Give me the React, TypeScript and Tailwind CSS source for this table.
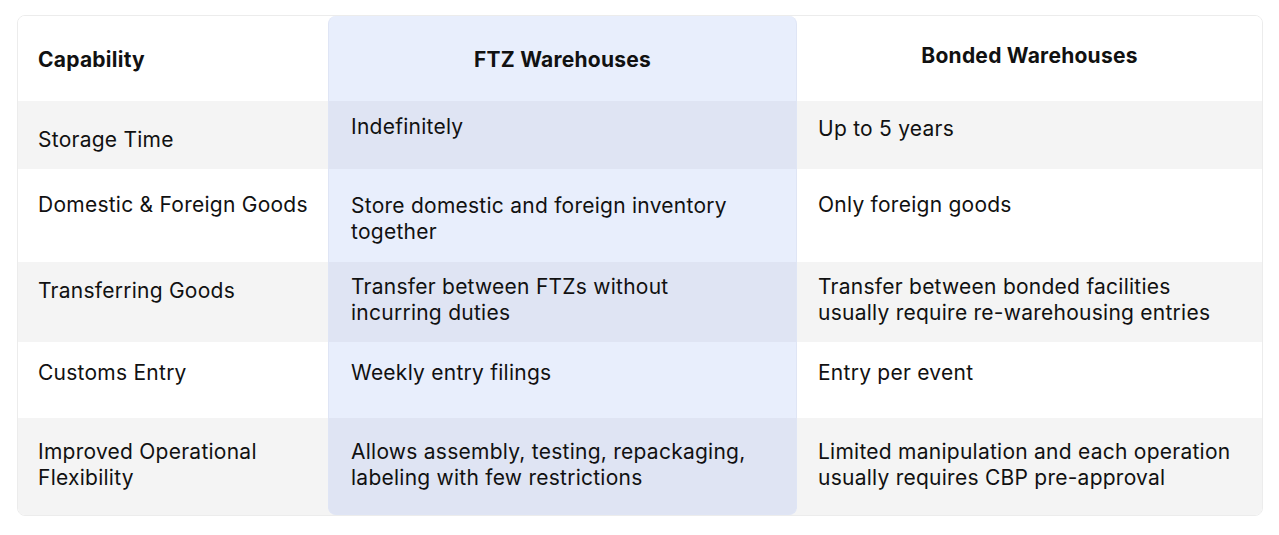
import React from "react";

type Cell = { text: React.ReactNode; pt: string };
type Row = { h: string; gray: boolean; cells: [Cell, Cell, Cell] };

const rows: Row[] = [
  {
    h: "h-[68px]",
    gray: true,
    cells: [
      { text: "Storage Time", pt: "pt-[26px]" },
      { text: "Indefinitely", pt: "pt-[13px]" },
      { text: "Up to 5 years", pt: "pt-[15px]" },
    ],
  },
  {
    h: "h-[93px]",
    gray: false,
    cells: [
      { text: "Domestic & Foreign Goods", pt: "pt-[23px]" },
      {
        text: (
          <>
            Store domestic and foreign inventory
            <br />
            together
          </>
        ),
        pt: "pt-[24px]",
      },
      { text: "Only foreign goods", pt: "pt-[23px]" },
    ],
  },
  {
    h: "h-[80px]",
    gray: true,
    cells: [
      { text: "Transferring Goods", pt: "pt-[16px]" },
      {
        text: (
          <>
            Transfer between FTZs without
            <br />
            incurring duties
          </>
        ),
        pt: "pt-[12px]",
      },
      {
        text: (
          <>
            Transfer between bonded facilities
            <br />
            usually require re-warehousing entries
          </>
        ),
        pt: "pt-[12px]",
      },
    ],
  },
  {
    h: "h-[76px]",
    gray: false,
    cells: [
      { text: "Customs Entry", pt: "pt-[18px]" },
      { text: "Weekly entry filings", pt: "pt-[18px]" },
      { text: "Entry per event", pt: "pt-[18px]" },
    ],
  },
  {
    h: "h-[97px]",
    gray: true,
    cells: [
      {
        text: (
          <>
            Improved Operational
            <br />
            Flexibility
          </>
        ),
        pt: "pt-[21px]",
      },
      {
        text: (
          <>
            Allows assembly, testing, repackaging,
            <br />
            labeling with few restrictions
          </>
        ),
        pt: "pt-[21px]",
      },
      {
        text: (
          <>
            Limited manipulation and each operation
            <br />
            usually requires CBP pre-approval
          </>
        ),
        pt: "pt-[21px]",
      },
    ],
  },
];

export default function App() {
  return (
    <div
      className="w-[1279px] h-[535px] bg-white pt-[15px] pl-[17px] text-[#111111]"
      style={{ fontFamily: "Inter, 'Noto Sans', sans-serif" }}
    >
      <div className="w-[1246px] rounded-[8px] border border-[#ececec] overflow-hidden flex flex-col text-[21px] leading-[26px] tracking-[0.25px]">
        {/* header */}
        <div className="flex h-[85px] bg-white">
          <div className="w-[310px] pl-[20px] pt-[31px] font-bold">Capability</div>
          <div className="w-[469px] pt-[31px] text-center font-bold bg-[#e8eefc] rounded-t-[8px] border-x border-[#dfe5f5]">
            FTZ Warehouses
          </div>
          <div className="flex-1 pt-[27px] text-center font-bold">Bonded Warehouses</div>
        </div>
        {rows.map((r, i) => {
          const last = i === rows.length - 1;
          return (
            <div key={i} className={`flex ${r.h} ${r.gray ? "bg-[#f4f4f4]" : "bg-white"}`}>
              <div className={`w-[310px] pl-[20px] whitespace-nowrap ${r.cells[0].pt}`}>{r.cells[0].text}</div>
              <div
                className={`w-[469px] pl-[22px] whitespace-nowrap border-x border-[#dfe5f5] ${r.cells[1].pt} ${
                  r.gray ? "bg-[#dfe4f3]" : "bg-[#e8eefc]"
                } ${last ? "rounded-b-[8px] border-b" : ""}`}
              >
                {r.cells[1].text}
              </div>
              <div className={`flex-1 pl-[21px] whitespace-nowrap ${r.cells[2].pt}`}>{r.cells[2].text}</div>
            </div>
          );
        })}
      </div>
    </div>
  );
}
